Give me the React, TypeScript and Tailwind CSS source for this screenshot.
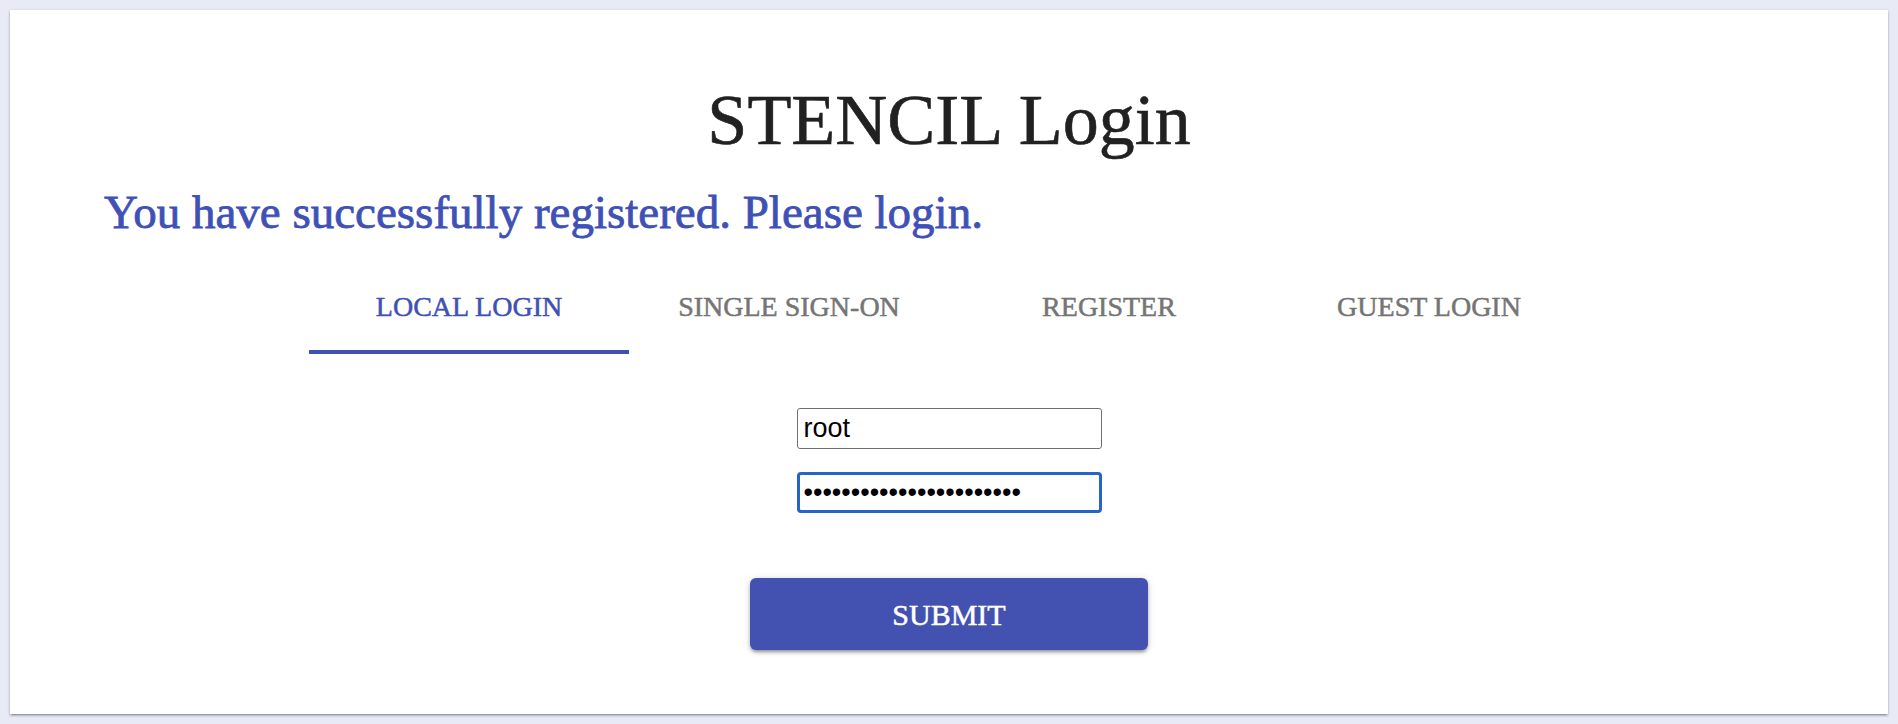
import { useState } from "react";

const tabs = ["Local Login", "Single Sign-On", "Register", "Guest Login"];

export default function App() {
  const [activeTab, setActiveTab] = useState(0);
  const [username, setUsername] = useState("root");
  const [password, setPassword] = useState("stencilrootpassword1234");

  return (
    <div className="min-h-screen w-full bg-[#e8eaf6] p-[10px]">
      <div
        className="bg-white pt-[70px] pb-[64px] shadow-[0_1px_3px_rgba(0,0,0,0.2),0_2px_2px_rgba(0,0,0,0.14),0_3px_1px_-2px_rgba(0,0,0,0.12)]"
        style={{ fontFamily: '"Liberation Serif", "DejaVu Serif", serif' }}>
        {/* Title */}
        <h1 className="text-center text-[72px] leading-[80px] font-normal text-[#212121] [-webkit-text-stroke:0.6px_#212121]">
          STENCIL Login
        </h1>

        {/* Registration notice */}
        <p className="mt-[25px] pl-[94px] text-[47px] leading-[54px] text-[#3f51b5] [-webkit-text-stroke:0.8px_#3f51b5]">
          You have successfully registered. Please login.
        </p>

        {/* Tabs */}
        <div className="mx-auto mt-[52px] flex w-[1280px]">
          {tabs.map((tab, index) => (
            <button
              key={tab}
              type="button"
              onClick={() => setActiveTab(index)}
              className={`flex-1 pb-[27px] text-[28px] leading-[32px] uppercase border-b-4 [-webkit-text-stroke:0.5px_currentColor] ${
                activeTab === index
                  ? "text-[#3f51b5] border-[#3f51b5]"
                  : "text-[#757575] border-transparent"
              }`}>
              {tab}
            </button>
          ))}
        </div>

        {/* Login form */}
        <form
          onSubmit={(e) => e.preventDefault()}
          className="mt-[54px] flex flex-col items-center"
          style={{ fontFamily: '"Liberation Sans", Arial, sans-serif' }}>
          <input
            type="text"
            value={username}
            onChange={(e) => setUsername(e.target.value)}
            className="h-[41px] w-[305px] rounded-[3px] border border-[#6f6f6f] px-[6px] text-[27px] text-black outline-none"
          />
          <input
            type="password"
            value={password}
            onChange={(e) => setPassword(e.target.value)}
            className="mt-[23px] h-[41px] w-[305px] rounded-[4px] border-[3px] border-[#2763c9] px-[4px] text-[27px] text-black outline-none"
          />
          <button
            type="submit"
            className="mt-[65px] flex h-[72px] w-[398px] items-center justify-center rounded-[6px] bg-[#4352b0] text-[30px] uppercase text-white [-webkit-text-stroke:0.5px_#ffffff] shadow-[0_3px_3px_-1px_rgba(0,0,0,0.25),0_2px_4px_rgba(0,0,0,0.16),0_1px_8px_rgba(0,0,0,0.12)]"
            style={{ fontFamily: '"Liberation Serif", "DejaVu Serif", serif' }}>
            Submit
          </button>
        </form>
      </div>
    </div>
  );
}
